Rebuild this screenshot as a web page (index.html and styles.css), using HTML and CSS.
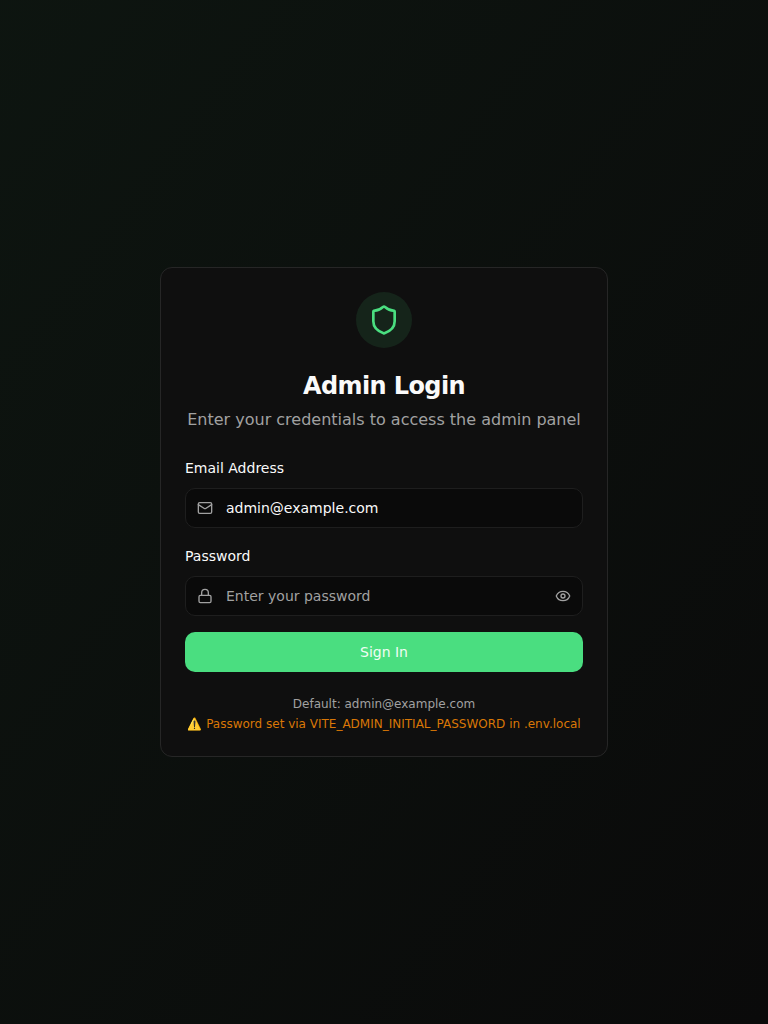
FILE: index.html
```html
<!DOCTYPE html>
<html lang="en">
<head>
<meta charset="utf-8">
<title>Admin Login</title>
<link rel="stylesheet" href="styles.css">
</head>
<body>
<main class="page">
  <section class="card">
    <header class="card-header">
      <div class="badge">
        <svg class="shield" viewBox="0 0 24 24"><path d="M20 13c0 5-3.5 7.5-7.66 8.95a1 1 0 0 1-.67-.01C7.5 20.5 4 18 4 13V6a1 1 0 0 1 1-1c2 0 4.5-1.2 6.24-2.72a1.17 1.17 0 0 1 1.52 0C14.51 3.81 17 5 19 5a1 1 0 0 1 1 1z"/></svg>
      </div>
      <h1 class="title">Admin Login</h1>
      <p class="subtitle">Enter your credentials to access the admin panel</p>
    </header>
    <form class="form">
      <div class="field">
        <label class="label" for="email">Email Address</label>
        <div class="control">
          <svg class="icon" viewBox="0 0 24 24"><path d="m22 7-8.991 5.727a2 2 0 0 1-2.009 0L2 7"/><rect width="20" height="16" x="2" y="4" rx="2"/></svg>
          <input class="input" id="email" type="email" value="admin@example.com">
        </div>
      </div>
      <div class="field">
        <label class="label" for="password">Password</label>
        <div class="control">
          <svg class="icon" viewBox="0 0 24 24"><rect width="18" height="11" x="3" y="11" rx="2"/><path d="M7 11V7a5 5 0 0 1 10 0v4"/></svg>
          <input class="input" id="password" type="password" placeholder="Enter your password">
          <svg class="icon" viewBox="0 0 24 24"><path d="M2.062 12.348a1 1 0 0 1 0-.696 10.75 10.75 0 0 1 19.876 0 1 1 0 0 1 0 .696 10.75 10.75 0 0 1-19.876 0"/><circle cx="12" cy="12" r="3"/></svg>
        </div>
      </div>
      <button class="submit" type="button">Sign In</button>
    </form>
    <footer class="notes">
      <p>Default: admin@example.com</p>
      <p class="warning">⚠️ Password set via VITE_ADMIN_INITIAL_PASSWORD in .env.local</p>
    </footer>
  </section>
</main>
</body>
</html>
```
FILE: styles.css
```css
* { box-sizing: border-box; }
body, h1, p { margin: 0; }
body { font-family: "DejaVu Sans", sans-serif; color: #fafafa; background: #0a0a0a; }
.page {
  min-height: 100vh;
  display: flex;
  align-items: center;
  justify-content: center;
  padding: 16px;
  background: linear-gradient(to bottom right, rgba(74, 222, 128, 0.05), #0a0a0a);
}
.card {
  width: 448px;
  padding: 24px;
  background: #0f0f0f;
  border: 1px solid #262626;
  border-radius: 12px;
}
.card-header { display: flex; flex-direction: column; align-items: center; text-align: center; }
.badge {
  width: 56px;
  height: 56px;
  display: flex;
  align-items: center;
  justify-content: center;
  margin-bottom: 22px;
  border-radius: 50%;
  background: rgba(74, 222, 128, 0.1);
}
.shield { width: 32px; height: 32px; fill: none; stroke: #4ade80; stroke-width: 2; stroke-linecap: round; stroke-linejoin: round; }
.title { font-size: 24px; line-height: 32px; font-weight: 700; letter-spacing: -0.6px; }
.subtitle { margin-top: 6px; font-size: 16px; line-height: 24px; color: #a1a1a1; white-space: nowrap; }
.form { display: flex; flex-direction: column; gap: 16px; margin-top: 24px; }
.field { display: flex; flex-direction: column; gap: 8px; }
.label { font-size: 14px; line-height: 24px; }
.control {
  display: flex;
  align-items: center;
  gap: 13px;
  height: 40px;
  padding: 0 11px;
  border: 1px solid #1e1e1e;
  border-radius: 10px;
  background: #0a0a0a;
}
.icon { flex: none; width: 16px; height: 16px; fill: none; stroke: #a1a1a1; stroke-width: 2; stroke-linecap: round; stroke-linejoin: round; }
.input { flex: 1; min-width: 0; padding: 0; border: 0; outline: 0; background: transparent; color: #fafafa; font: 14px/20px "DejaVu Sans", sans-serif; }
.input::placeholder { color: #a1a1a1; opacity: 1; }
.submit { height: 40px; border: 0; border-radius: 10px; background: #4ade80; color: #f0fdf4; font: 14px/20px "DejaVu Sans", sans-serif; }
.notes { margin-top: 24px; text-align: center; font-size: 12px; line-height: 16px; color: #a1a1a1; white-space: nowrap; }
.warning { margin-top: 4px; color: #d97706; }
```
